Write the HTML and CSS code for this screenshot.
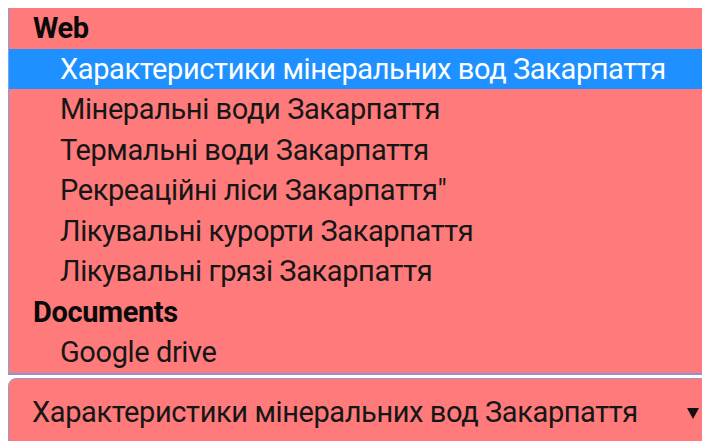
FILE: index.html
```html
<!DOCTYPE html>
<html lang="uk">
<head>
<meta charset="utf-8">
<title>Закарпаття</title>
<link rel="stylesheet" href="styles.css">
</head>
<body>
  <div class="picker">
    <ul class="listbox">
      <li class="group">Web</li>
      <li class="option selected">Характеристики мінеральних вод Закарпаття</li>
      <li class="option">Мінеральні води Закарпаття</li>
      <li class="option">Термальні води Закарпаття</li>
      <li class="option">Рекреаційні ліси Закарпаття"</li>
      <li class="option">Лікувальні курорти Закарпаття</li>
      <li class="option">Лікувальні грязі Закарпаття</li>
      <li class="group">Documents</li>
      <li class="option">Google drive</li>
    </ul>
    <div class="select">
      <span class="value">Характеристики мінеральних вод Закарпаття</span>
      <svg class="arrow" width="12" height="11" viewBox="0 0 12 11"><polygon points="0,0 12,0 6,11" fill="#111"/></svg>
    </div>
  </div>
</body>
</html>
```

FILE: styles.css
```css
html, body {
  margin: 0;
  padding: 0;
  background: #fff;
  overflow: hidden;
}

body {
  padding: 8px 0 0 8px;
  font-family: Roboto, "Noto Sans", sans-serif;
  font-size: 29px;
  letter-spacing: -0.4px;
  color: #161616;
}

.picker {
  width: 706px;
  display: flex;
  flex-direction: column;
  gap: 3px;
}

.listbox {
  list-style: none;
  margin: 0;
  padding: 0;
  background: #ff7a7a;
  border-left: 1px solid #7fa2e4;
  border-bottom: 2px solid #8c94d4;
}

.listbox li {
  line-height: 40.5px;
  height: 40.5px;
  white-space: nowrap;
}

.group {
  font-weight: 700;
  color: #0a0a0a;
  padding-left: 24px;
}

.option {
  padding-left: 51px;
}

.option.selected {
  background: #1e90ff;
  color: #fff;
}

.select {
  box-sizing: border-box;
  display: flex;
  align-items: center;
  justify-content: space-between;
  background: #ff7a7a;
  border: 1px solid #a593c8;
  border-radius: 8px;
  padding: 13px 14px 20px 23px;
  line-height: 40.5px;
  white-space: nowrap;
}

.arrow {
  margin-top: 4px;
}
```
